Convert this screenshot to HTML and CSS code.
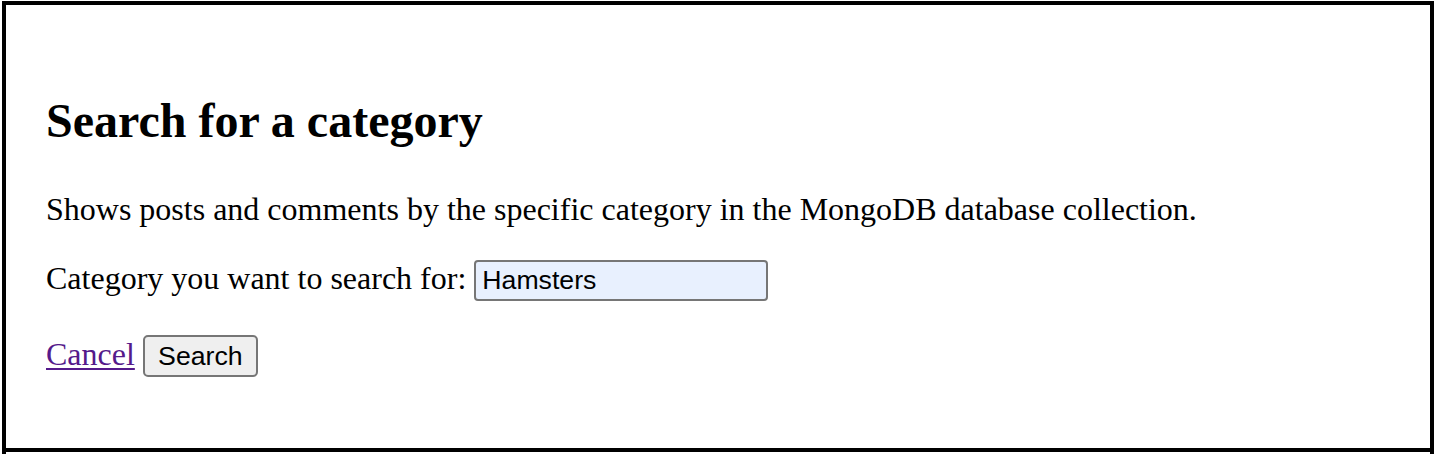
FILE: index.html
```html
<!DOCTYPE html>
<html lang="en">
<head>
<meta charset="utf-8">
<title>Search for a category</title>
<link rel="stylesheet" href="styles.css">
</head>
<body>
<div class="frame">
  <section class="panel">
    <h2 class="title">Search for a category</h2>
    <p class="desc">Shows posts and comments by the specific category in the MongoDB database collection.</p>
    <form class="search-form" action="#">
      <p class="row"><label class="label" for="category">Category you want to search for:</label> <input class="field" id="category" type="text" value="Hamsters"></p>
      <p class="actions"><a class="cancel" href="#">Cancel</a> <button class="btn" type="submit">Search</button></p>
    </form>
  </section>
</div>
</body>
</html>
```

FILE: styles.css
```css
html, body {
  margin: 0;
  padding: 0;
  background: #fff;
  overflow: hidden;
  height: 454px;
}
body {
  font-family: "Liberation Serif", "Times New Roman", serif;
  font-size: 32px;
  color: #000;
}
.frame {
  margin: 1px 4px 0 2px;
  border: 4px solid #000;
  border-bottom: none;
  height: 449px;
}
.panel {
  height: 447px;
  box-sizing: border-box;
  padding: 88px 40px 0 40px;
  border-bottom: 4px solid #000;
}
.title {
  margin: 0 0 43px 0;
  font-size: 48px;
  font-weight: bold;
}
.desc,
.actions {
  margin: 32px 0;
}
.row {
  margin: 30px 0 34px 0;
}
.desc {
  margin-top: 0;
}
.search-form {
  margin: 0;
}
.field {
  box-sizing: border-box;
  width: 294px;
  height: 41px;
  padding: 2px 6px;
  border: 2px solid #767676;
  border-radius: 4px;
  background: #e8f0fe;
  font-family: "Liberation Sans", Arial, sans-serif;
  font-size: 26.67px;
  color: #000;
  vertical-align: baseline;
}
.cancel {
  color: #551a8b;
  text-decoration: underline;
  text-decoration-thickness: 2px;
  text-underline-offset: 3px;
}
.btn {
  box-sizing: border-box;
  height: 42px;
  width: 115px;
  padding: 0 12px;
  border: 2px solid #767676;
  border-radius: 5px;
  background: #efefef;
  font-family: "Liberation Sans", Arial, sans-serif;
  font-size: 26.67px;
  color: #000;
}
```
